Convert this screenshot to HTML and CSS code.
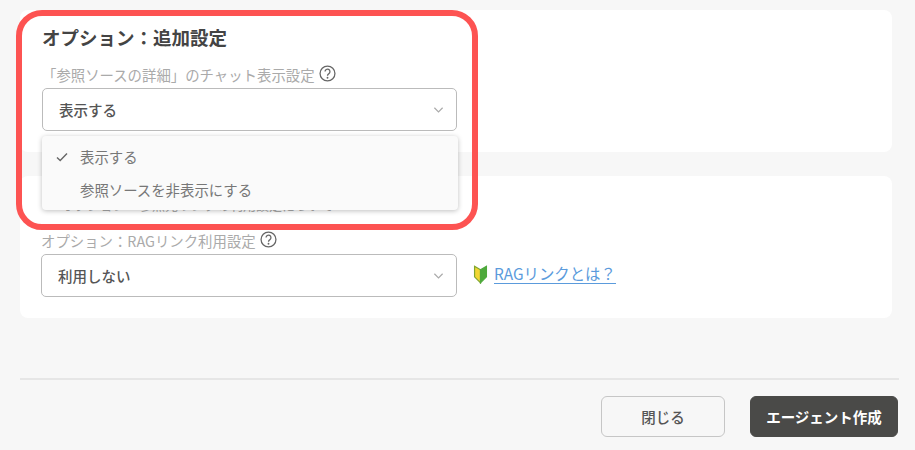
FILE: index.html
```html
<!DOCTYPE html>
<html lang="ja">
<head>
    <meta charset="UTF-8" />
    <meta name="viewport" content="width=device-width, initial-scale=1" />
    <title>エージェント作成</title>
    <link rel="stylesheet" href="styles.css">
</head>
<body>
<div class="page">
    <section class="card card-first">
        <h2 class="card-title">オプション：追加設定</h2>
        <div class="label">「参照ソースの詳細」のチャット表示設定
            <svg class="help" viewBox="0 0 16 16"><circle cx="8" cy="8" r="7"/><path d="M5.7 6.2a2.3 2.3 0 1 1 3.6 1.9c-.8.5-1.3 1-1.3 2"/><circle class="dot" cx="8" cy="12" r=".9"/></svg>
        </div>
        <div class="select">
            <span>表示する</span>
            <svg class="chevron" viewBox="0 0 12 8"><path d="M1.5 1.5 6 6l4.5-4.5"/></svg>
        </div>
    </section>

    <section class="card card-second">
        <div class="hidden-line">オプション：参照元リンクの利用設定について</div>
        <div class="label">オプション：RAGリンク利用設定
            <svg class="help" viewBox="0 0 16 16"><circle cx="8" cy="8" r="7"/><path d="M5.7 6.2a2.3 2.3 0 1 1 3.6 1.9c-.8.5-1.3 1-1.3 2"/><circle class="dot" cx="8" cy="12" r=".9"/></svg>
        </div>
        <div class="select-row">
            <div class="select">
                <span>利用しない</span>
                <svg class="chevron" viewBox="0 0 12 8"><path d="M1.5 1.5 6 6l4.5-4.5"/></svg>
            </div>
            <svg class="mark" viewBox="0 0 12 16">
                <path class="mark-left" d="M6 4 1 1v9l5 5z"/>
                <path class="mark-right" d="M6 4l5-3v9l-5 5z"/>
            </svg>
            <a class="rag-link" href="#">RAGリンクとは？</a>
        </div>
    </section>

    <div class="footer">
        <button class="btn">閉じる</button>
        <button class="btn btn-dark">エージェント作成</button>
    </div>

    <div class="menu">
        <div class="menu-item">
            <svg class="check" viewBox="0 0 12 10"><path d="M1 5.5 4.2 8.5 11 1.5"/></svg>
            表示する
        </div>
        <div class="menu-item">参照ソースを非表示にする</div>
    </div>
    <div class="highlight"></div>
</div>
</body>
</html>
```

FILE: styles.css
```css
body {
  margin: 0;
  background: #f7f7f7;
  font-family: "Noto Sans CJK JP", "Noto Sans", sans-serif;
  color: #444;
}
.page {
  position: relative;
  width: 899px;
  height: 450px;
  padding: 10px 0 0 20px;
  box-sizing: border-box;
  overflow: hidden;
}
.card {
  width: 872px;
  height: 142px;
  background: #fff;
  border-radius: 8px;
  padding: 0 22px;
  box-sizing: border-box;
}
.card-first {
  padding-top: 14px;
  margin-bottom: 24px;
}
.card-first .select {
  width: 415px;
}
.card-second {
  padding-top: 23px;
  padding-left: 21px;
}
.card-title {
  margin: 0 0 14px;
  font-size: 18.5px;
  line-height: 26px;
  font-weight: 700;
  color: #444;
}
.hidden-line {
  padding-left: 20px;
  font-size: 13px;
  line-height: 12px;
  margin-bottom: 19px;
  color: #aaa;
}
.label {
  display: flex;
  align-items: center;
  gap: 4px;
  height: 20px;
  margin-bottom: 4px;
  font-size: 14.4px;
  color: #aaa;
}
.help {
  width: 17px;
  height: 17px;
  margin-top: -2px;
  fill: none;
  stroke: #666;
  stroke-width: 1.2;
}
.help .dot {
  fill: #666;
  stroke: none;
}
.select {
  display: flex;
  align-items: center;
  justify-content: space-between;
  width: 416px;
  height: 43px;
  padding: 0 12px 0 16px;
  box-sizing: border-box;
  background: #fff;
  border: 1px solid #bbb;
  border-radius: 5px;
  font-size: 14.5px;
  font-weight: 500;
  color: #555;
}
.chevron {
  width: 11px;
  height: 8px;
  fill: none;
  stroke: #aaa;
  stroke-width: 1.3;
}
.select-row {
  display: flex;
  align-items: center;
}
.mark {
  width: 15px;
  height: 19px;
  margin-top: -3px;
  margin-left: 16px;
  margin-right: 6px;
}
.mark-left {
  fill: #f2d633;
  stroke: #7fa52f;
}
.mark-right {
  fill: #4ea93c;
  stroke: #4ea93c;
}
.rag-link {
  margin-top: -4px;
  font-size: 15.4px;
  line-height: 20px;
  color: #5b9bdc;
  text-decoration: none;
  border-bottom: 1px solid #5b9bdc;
}
.footer {
  display: flex;
  justify-content: flex-end;
  gap: 25px;
  width: 879px;
  margin-top: 60px;
  padding: 16px 1px 0 0;
  box-sizing: border-box;
  border-top: 2px solid #e6e6e6;
}
.btn {
  width: 124px;
  height: 41px;
  background: #f7f7f7;
  border: 1px solid #c6c6c6;
  border-radius: 6px;
  font-family: inherit;
  font-size: 14.5px;
  font-weight: 500;
  color: #555;
}
.btn-dark {
  width: 148px;
  background: #4a4a48;
  border-color: #4a4a48;
  color: #fff;
  font-weight: 700;
}
.menu {
  position: absolute;
  left: 42px;
  top: 136px;
  width: 416px;
  height: 74px;
  padding-top: 5px;
  box-sizing: border-box;
  background: #fafafa;
  border-radius: 4px;
  box-shadow: 0 1px 5px rgba(0,0,0,0.25);
}
.menu-item {
  position: relative;
  height: 33px;
  padding: 6px 0 7px 38px;
  box-sizing: border-box;
  font-size: 14.4px;
  line-height: 20px;
  color: #777;
}
.check {
  position: absolute;
  left: 14px;
  top: 11px;
  width: 12px;
  height: 10px;
  fill: none;
  stroke: #666;
  stroke-width: 1.4;
}
.highlight {
  position: absolute;
  left: 16px;
  top: 10px;
  width: 462px;
  height: 220px;
  box-sizing: border-box;
  border: 6px solid #fd5352;
  border-radius: 26px;
}
```
